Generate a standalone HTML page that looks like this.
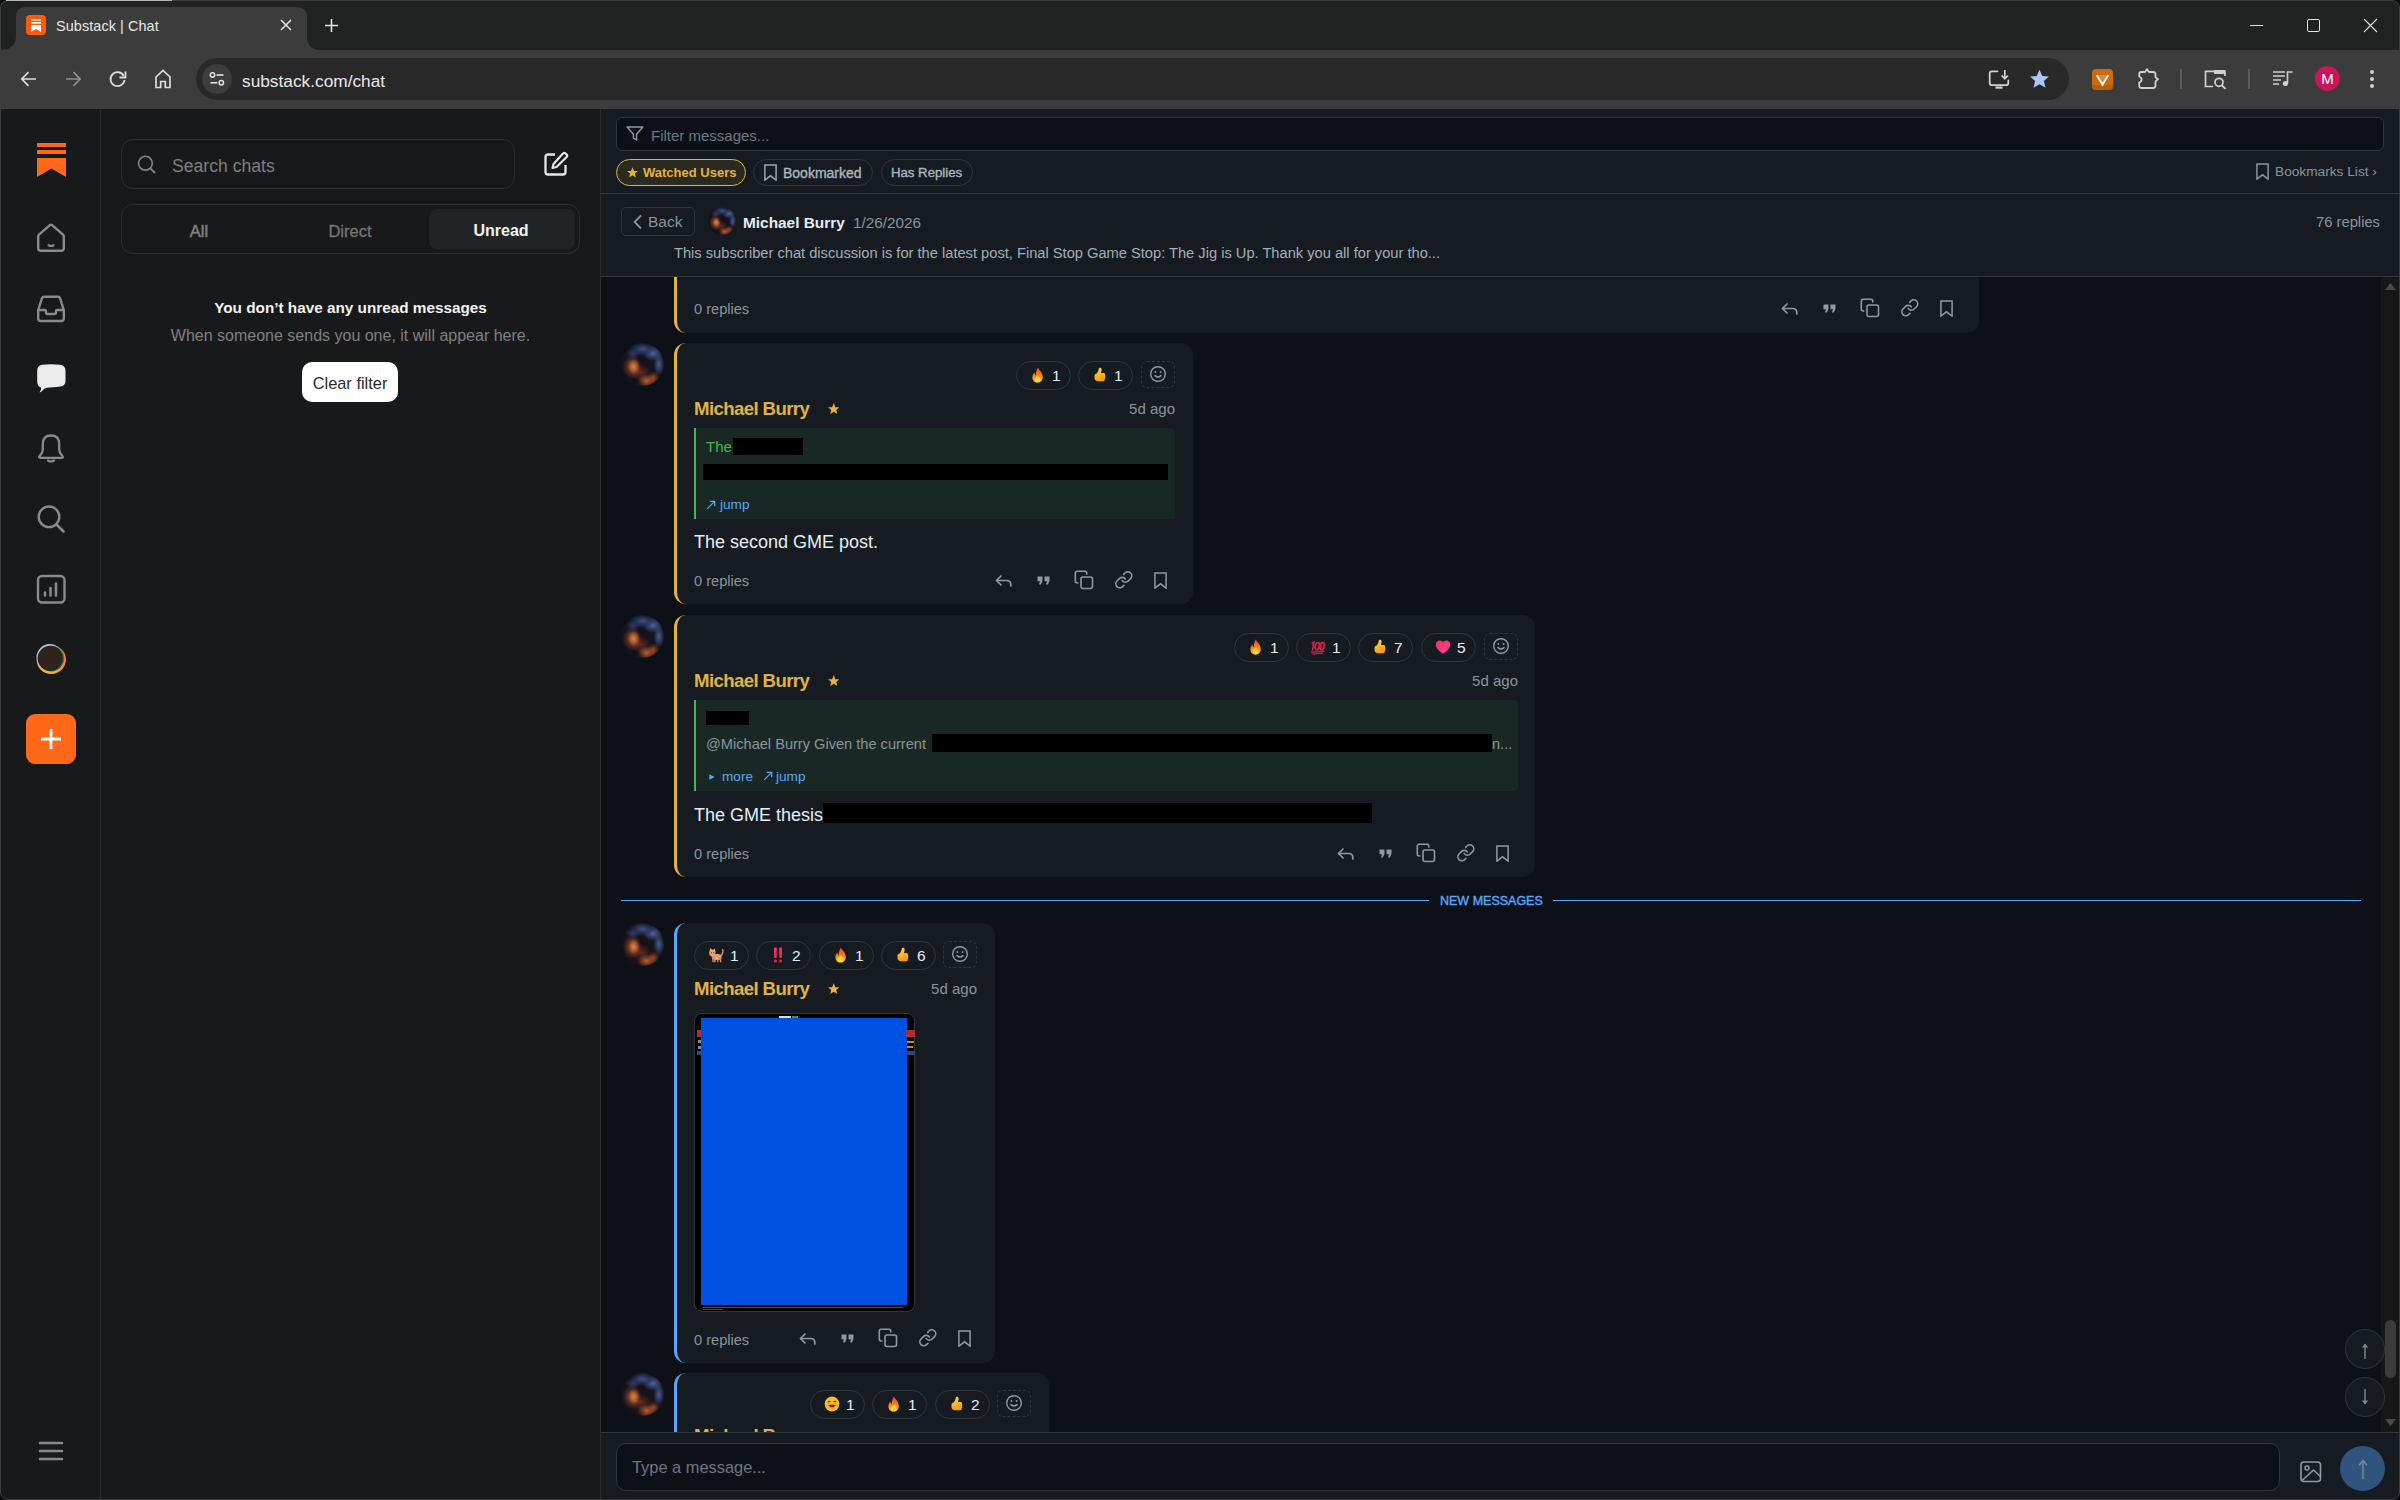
<!DOCTYPE html>
<html><head><meta charset="utf-8">
<style>
*{box-sizing:border-box;margin:0;padding:0}
html,body{width:2400px;height:1500px;overflow:hidden;background:#202020;font-family:"Liberation Sans",sans-serif}
.abs{position:absolute}
#tabstrip{left:0;top:0;width:2400px;height:50px;background:#202121}
#toolbar{left:0;top:50px;width:2400px;height:59px;background:#3c3c3c}
#page{left:0;top:109px;width:2400px;height:1391px;background:#18191b}
#rail{left:0;top:0;width:101px;height:1391px;background:#18191b;border-right:1px solid #2c2d2f}
#list{left:101px;top:0;width:500px;height:1391px;background:#18191b;border-right:1px solid #2c2d2f}
#main{left:601px;top:0;width:1799px;height:1391px;background:#0d1117}
svg{display:block}
</style></head>
<body>

<div id="tabstrip" class="abs">
  <!-- window border hint -->
  
  <!-- active tab -->
  <svg class="abs" style="left:0;top:0" width="330" height="50">
    <path d="M0 50 Q16 50 16 36 L16 17 Q16 7 26 7 L297 7 Q307 7 307 17 L307 36 Q307 50 321 50 Z" fill="#3c3c3c"/>
  </svg>
  <!-- favicon -->
  <div class="abs" style="left:26px;top:15px;width:20px;height:20px;border-radius:4px;background:#ff5a0a"></div>
  <svg class="abs" style="left:26px;top:15px" width="20" height="20"><rect x="5" y="4" width="10" height="1.6" fill="#fff"/><rect x="5" y="7" width="10" height="1.6" fill="#fff"/><path d="M5 10 L15 10 L15 17 L10 14 L5 17 Z" fill="#fff"/></svg>
  <div class="abs" style="left:56px;top:18px;font-size:14.4px;color:#e8e8e8;letter-spacing:0.1px">Substack | Chat</div>
  <svg class="abs" style="left:279px;top:18px" width="14" height="14"><path d="M2 2 L12 12 M12 2 L2 12" stroke="#e3e3e3" stroke-width="1.6"/></svg>
  <svg class="abs" style="left:324px;top:18px" width="15" height="15"><path d="M7.5 1 V14 M1 7.5 H14" stroke="#e3e3e3" stroke-width="1.6"/></svg>
  <!-- window controls -->
  <div class="abs" style="left:2250px;top:25px;width:13px;height:1px;background:#e3e3e3"></div>
  <div class="abs" style="left:2307px;top:19px;width:13px;height:13px;border:1px solid #e3e3e3;border-radius:2px"></div>
  <svg class="abs" style="left:2363px;top:18px" width="15" height="15"><path d="M1 1 L14 14 M14 1 L1 14" stroke="#e3e3e3" stroke-width="1.1"/></svg>
</div>
<div id="toolbar" class="abs">
  <svg class="abs" style="left:19px;top:19px" width="20" height="20"><path d="M17 10 H3 M9.5 3.2 L2.8 10 L9.5 16.8" stroke="#dcdcdc" stroke-width="1.7" fill="none"/></svg>
  <svg class="abs" style="left:63px;top:19px" width="20" height="20"><path d="M3 10 H17 M10.5 3.2 L17.2 10 L10.5 16.8" stroke="#8f8f8f" stroke-width="1.7" fill="none"/></svg>
  <svg class="abs" style="left:108px;top:19px" width="20" height="20"><path d="M15.8 7 A7 7 0 1 0 16.5 11" stroke="#dcdcdc" stroke-width="1.8" fill="none"/><path d="M17.5 2.5 V8.5 H11.5" stroke="#dcdcdc" stroke-width="1.8" fill="none"/></svg>
  <svg class="abs" style="left:153px;top:18px" width="20" height="22"><path d="M3 19.5 V9 L10 2.5 L17 9 V19.5 H12.3 V13.5 H7.7 V19.5 Z" stroke="#dcdcdc" stroke-width="1.7" fill="none" stroke-linejoin="miter"/></svg>
  <!-- omnibox -->
  <div class="abs" style="left:196px;top:8px;width:1873px;height:42px;border-radius:21px;background:#282828"></div>
  <div class="abs" style="left:202px;top:14px;width:30px;height:30px;border-radius:15px;background:#3d3d3d"></div>
  <svg class="abs" style="left:207px;top:19px" width="20" height="20"><circle cx="5.5" cy="6" r="2.2" stroke="#e3e3e3" stroke-width="1.5" fill="none"/><path d="M9.5 6 H16.5" stroke="#e3e3e3" stroke-width="1.6"/><circle cx="14.3" cy="13.8" r="2.2" stroke="#e3e3e3" stroke-width="1.5" fill="none"/><path d="M3.5 13.8 H10.3" stroke="#e3e3e3" stroke-width="1.6"/></svg>
  <div class="abs" style="left:242px;top:21px;font-size:17.3px;color:#e8e8e8">substack.com/chat</div>
  <!-- install icon -->
  <svg class="abs" style="left:1988px;top:19px" width="24" height="22"><path d="M9.5 2.3 H4 Q1.7 2.3 1.7 4.6 V14 Q1.7 16.2 4 16.2 H18 Q20.3 16.2 20.3 14 V11.5" stroke="#d0d0d0" stroke-width="1.8" fill="none" stroke-linecap="round"/><rect x="7.5" y="17.5" width="7" height="2.2" fill="#d0d0d0"/><path d="M16.8 1 V9.5 M13.6 6.5 L16.8 9.7 L20 6.5" stroke="#d0d0d0" stroke-width="1.7" fill="none"/></svg>
  <!-- star -->
  <svg class="abs" style="left:2029px;top:19px" width="21" height="20"><path d="M10.5 0.8 L13.3 7.1 L20 7.6 L14.9 12 L16.5 18.8 L10.5 15.2 L4.5 18.8 L6.1 12 L1 7.6 L7.7 7.1 Z" fill="#a8c7fa"/></svg>
  <!-- orange ext -->
  <div class="abs" style="left:2092px;top:19px;width:21px;height:21px;border-radius:4px;background:#cc6a0e"></div>
  <div class="abs" style="left:2092px;top:35px;width:21px;height:5px;border-radius:0 0 4px 4px;background:#b85c0a"></div>
  <svg class="abs" style="left:2092px;top:19px" width="21" height="21"><path d="M6 6 H15 L10.5 14 Z" fill="#d88a4a"/><path d="M4.8 6.2 L10.5 15.5 L16.2 6.2" stroke="#fff" stroke-width="1.8" fill="none"/><circle cx="10.5" cy="16.3" r="0.9" fill="#fff"/></svg>
  <!-- puzzle -->
  <svg class="abs" style="left:2136px;top:17px" width="25" height="24"><path d="M5 5 H9 L11 2.2 L13 5 H17 Q19.5 5 19.5 7.5 V10.2 L22 12.3 L19.5 14.4 V18.5 Q19.5 21 17 21 H5.5 Q3.2 21 3.2 18.5 V15.5 Q5.6 14.6 5.6 12.5 Q5.6 10.4 3.2 9.5 V7.5 Q3.2 5 5 5 Z" stroke="#d0d0d0" stroke-width="1.8" fill="none" stroke-linejoin="round"/></svg>
  <div class="abs" style="left:2180px;top:19px;width:2px;height:20px;background:#5c5c5c"></div>
  <!-- tab search -->
  <svg class="abs" style="left:2204px;top:19px" width="26" height="23"><path d="M9 17.5 H1.5 V2.3 H21 V7" stroke="#d0d0d0" stroke-width="1.7" fill="none"/><rect x="10" y="1" width="11" height="4" fill="#d0d0d0"/><circle cx="15" cy="13.3" r="4" stroke="#d0d0d0" stroke-width="1.7" fill="none"/><path d="M18 16.3 L21.5 19.8" stroke="#d0d0d0" stroke-width="1.9"/></svg>
  <div class="abs" style="left:2248px;top:19px;width:2px;height:20px;background:#5c5c5c"></div>
  <!-- media -->
  <svg class="abs" style="left:2272px;top:19px" width="22" height="20"><path d="M1 3 H13 M1 7 H13 M1 11 H9 M1 15 H7" stroke="#d0d0d0" stroke-width="1.6"/><path d="M15.5 14 V3 H20.5" stroke="#d0d0d0" stroke-width="1.6" fill="none"/><circle cx="13.5" cy="14.5" r="2.6" fill="#d0d0d0"/></svg>
  <!-- avatar -->
  <div class="abs" style="left:2315px;top:16px;width:25px;height:25px;border-radius:50%;background:#c5175a;color:#fff;font-size:15px;text-align:center;line-height:25px">M</div>
  <!-- menu -->
  <svg class="abs" style="left:2368px;top:19px" width="8" height="20"><circle cx="4" cy="3" r="2" fill="#d0d0d0"/><circle cx="4" cy="10" r="2" fill="#d0d0d0"/><circle cx="4" cy="17" r="2" fill="#d0d0d0"/></svg>
</div>

<div id="page" class="abs">
  <div id="rail" class="abs">
    <svg class="abs" style="left:37px;top:33px" width="30" height="36"><rect x="0" y="1" width="29" height="4" fill="#ff6719"/><rect x="0" y="8" width="29" height="4" fill="#ff6719"/><path d="M0 16 H29 V35 L14.5 26.5 L0 35 Z" fill="#ff6719"/></svg>
    <svg class="abs" style="left:35px;top:113px" width="32" height="32"><path d="M3.2 14.5 Q3.2 13.5 4 12.7 L14.6 3.3 Q16 2.2 17.4 3.3 L28 12.7 Q28.8 13.5 28.8 14.5 V26 Q28.8 28.8 26 28.8 H6 Q3.2 28.8 3.2 26 Z" stroke="#8a8a8a" stroke-width="2.4" fill="none" stroke-linejoin="round"/><path d="M13.5 23.2 Q16 24.6 18.5 23.2" stroke="#8a8a8a" stroke-width="2.2" fill="none" stroke-linecap="round"/></svg>
    <svg class="abs" style="left:35px;top:185px" width="32" height="32"><path d="M3.2 16 L7 4.2 Q7.5 2.8 9 2.8 H23 Q24.5 2.8 25 4.2 L28.8 16 V24.5 Q28.8 27 26.3 27 H5.7 Q3.2 27 3.2 24.5 Z" stroke="#8a8a8a" stroke-width="2.4" fill="none" stroke-linejoin="round"/><path d="M3.2 16 H10 Q11 16 11 17 V18.5 Q11 20 12.5 20 H19.5 Q21 20 21 18.5 V17 Q21 16 22 16 H28.8" stroke="#8a8a8a" stroke-width="2.4" fill="none" stroke-linejoin="round"/></svg>
    <svg class="abs" style="left:35px;top:254px" width="32" height="32"><path d="M7 1.8 Q16 0.6 25.5 1.8 Q30.5 2.5 30.5 8 V17.5 Q30.5 23 25.5 23.5 Q17 24.5 12 24.8 Q9.5 25 8 27 Q6.5 29 4.5 29.5 Q6.5 27 6 24.5 Q2.2 23.5 2.2 18 V8 Q2.2 2.5 7 1.8 Z" fill="#ececec"/></svg>
    <svg class="abs" style="left:35px;top:324px" width="32" height="32"><path d="M16 2.5 Q7.8 2.5 7.8 11 V16.5 Q7.8 19.5 5 22.5 Q3 24.8 5.5 24.8 H26.5 Q29 24.8 27 22.5 Q24.2 19.5 24.2 16.5 V11 Q24.2 2.5 16 2.5 Z" stroke="#8a8a8a" stroke-width="2.3" fill="none" stroke-linejoin="round"/><path d="M13 27.5 Q16 29.5 19 27.5" stroke="#8a8a8a" stroke-width="2.2" fill="none" stroke-linecap="round"/></svg>
    <svg class="abs" style="left:35px;top:394px" width="32" height="32"><circle cx="14" cy="13.8" r="10.3" stroke="#8a8a8a" stroke-width="2.4" fill="none"/><path d="M21.5 21.5 L28.5 28.5" stroke="#8a8a8a" stroke-width="2.6" stroke-linecap="round"/></svg>
    <svg class="abs" style="left:35px;top:464px" width="32" height="32"><rect x="3" y="3" width="26.5" height="26.5" rx="4" stroke="#8a8a8a" stroke-width="2.4" fill="none"/><path d="M10 22.5 V19.5 M15.5 22.5 V15 M21 22.5 V10.5" stroke="#8a8a8a" stroke-width="2.6" stroke-linecap="round"/></svg>
    <svg class="abs" style="left:35px;top:534px" width="32" height="32"><circle cx="16.8" cy="16.6" r="14.2" fill="#ff7548"/><circle cx="15.4" cy="17.2" r="13.6" fill="#fcb12c"/><circle cx="14.8" cy="14.4" r="13.3" fill="#b9bdf0"/><circle cx="16.4" cy="15.6" r="12.8" fill="#137a62"/><circle cx="15.2" cy="15.3" r="12.6" fill="#2e241c"/></svg>
    <div class="abs" style="left:26px;top:605px;width:50px;height:50px;border-radius:9px;background:#ff6719"></div>
    <svg class="abs" style="left:26px;top:605px" width="50" height="50"><path d="M25 15 V35 M15 25 H35" stroke="#fff" stroke-width="2.8"/></svg>
    <svg class="abs" style="left:38px;top:1331px" width="26" height="22"><path d="M2 3 H24 M2 11 H24 M2 19 H24" stroke="#8a8a8a" stroke-width="2.6" stroke-linecap="round"/></svg>
  </div>
  <div id="list" class="abs">
    <div class="abs" style="left:20px;top:30px;width:394px;height:50px;border:1px solid #2e2f32;border-radius:12px"></div>
    <svg class="abs" style="left:36px;top:46px" width="20" height="20"><circle cx="8.4" cy="8.2" r="6.9" stroke="#858585" stroke-width="1.6" fill="none"/><path d="M13.4 13.3 L17.6 17.5" stroke="#858585" stroke-width="1.8" stroke-linecap="round"/></svg>
    <div class="abs" style="left:71px;top:47px;font-size:17.6px;color:#7f7f7f">Search chats</div>
    <svg class="abs" style="left:442px;top:42px" width="26" height="26"><path d="M12 3.5 H5 Q2.5 3.5 2.5 6 V21 Q2.5 23.5 5 23.5 H20 Q22.5 23.5 22.5 21 V14" stroke="#e6e6e6" stroke-width="2.3" fill="none" stroke-linejoin="round"/><path d="M20 2.5 Q21.3 1.3 22.6 2.5 L23.6 3.5 Q24.8 4.8 23.6 6 L13.5 16 L9.5 17 L10.5 13 Z" stroke="#e6e6e6" stroke-width="2.2" fill="none" stroke-linejoin="round"/></svg>
    <div class="abs" style="left:20px;top:95px;width:459px;height:50px;border:1px solid #2e2f32;border-radius:12px"></div>
    <div class="abs" style="left:328px;top:100px;width:146px;height:40px;border-radius:8px;background:#232425"></div>
    <div class="abs tab" style="left:48px;top:113px;width:100px;text-align:center;font-size:16.5px;color:#7e7e7e;-webkit-text-stroke:0.55px #7e7e7e">All</div>
    <div class="abs tab" style="left:199px;top:113px;width:100px;text-align:center;font-size:16.5px;color:#747474;-webkit-text-stroke:0.3px #747474">Direct</div>
    <div class="abs tab" style="left:350px;top:113px;width:100px;text-align:center;font-size:16px;font-weight:bold;color:#f2f2f2">Unread</div>
    <div class="abs" style="left:0;top:190px;width:499px;text-align:center;font-size:15.3px;font-weight:bold;color:#f2f2f2">You don’t have any unread messages</div>
    <div class="abs" style="left:0;top:218px;width:499px;text-align:center;font-size:16px;color:#808080">When someone sends you one, it will appear here.</div>
    <div class="abs" style="left:201px;top:253px;width:96px;height:40px;border-radius:10px;background:#ffffff"></div>
    <div class="abs" style="left:201px;top:265px;width:96px;text-align:center;font-size:16.4px;color:#2a2a2a">Clear filter</div>
  </div>
  <div id="main" class="abs"></div>
</div>
<!--MAIN-->
<div class="abs" style="left:601px;top:277px;width:1799px;height:1155px;background:#0d1117"></div>
<div class="abs" style="left:674px;top:200px;width:1305px;height:133px;background:#161b22;border-radius:12px;border-left:3px solid #e3b341"></div>
<div class="abs" style="left:694px;top:302px;white-space:nowrap;line-height:1;font-size:14.6px;color:#8b949e">0 replies</div>
<svg class="abs" style="left:1781px;top:303px;" width="18" height="14" viewBox="0 0 18 14"><path d="M6 1 L1.5 5.5 L6 10" stroke="#9198a1" stroke-width="1.7" fill="none" stroke-linecap="round" stroke-linejoin="round"/><path d="M1.8 5.5 H11.5 Q15.8 5.5 15.8 9.5 V11" stroke="#9198a1" stroke-width="1.7" fill="none" stroke-linecap="round"/></svg>
<svg class="abs" style="left:1823px;top:304px;" width="14" height="10" viewBox="0 0 14 10"><path d="M0.5 0.5 H5.5 V5 L3.9 8.5 H2 L2.9 5.3 H0.5 Z M7.5 0.5 H12.5 V5 L10.9 8.5 H9 L9.9 5.3 H7.5 Z" fill="#9198a1"/></svg>
<svg class="abs" style="left:1860px;top:298px;" width="20" height="20" viewBox="0 0 20 20"><rect x="7" y="7" width="11.5" height="11.5" rx="2" stroke="#9198a1" stroke-width="1.6" fill="none"/><path d="M3.8 13 H3.3 Q1.3 13 1.3 11 V3.3 Q1.3 1.3 3.3 1.3 H10.8 Q12.8 1.3 12.8 3.3 V4" stroke="#9198a1" stroke-width="1.6" fill="none" stroke-linecap="round"/></svg>
<svg class="abs" style="left:1900px;top:298px;" width="20" height="20" viewBox="0 0 20 20"><g transform="translate(0.2 0.2) scale(0.8)"><path d="M10 13a5 5 0 0 0 7.54.54l3-3a5 5 0 0 0-7.07-7.07l-1.72 1.71" stroke="#9198a1" stroke-width="2" fill="none" stroke-linecap="round"/><path d="M14 11a5 5 0 0 0-7.54-.54l-3 3a5 5 0 0 0 7.07 7.07l1.71-1.71" stroke="#9198a1" stroke-width="2" fill="none" stroke-linecap="round"/></g></svg>
<svg class="abs" style="left:1940px;top:300px;" width="13" height="17" viewBox="0 0 13 17"><path d="M0.9 0.9 H12.1 V16.1 L6.5 11.8 L0.9 16.1 Z" stroke="#9198a1" stroke-width="1.5" fill="none"/></svg>
<div class="abs" style="left:621px;top:343px;width:43px;height:43px;border-radius:50%;background:radial-gradient(ellipse 14% 18% at 30% 55%, rgba(235,130,70,0.95) 0%, rgba(0,0,0,0) 100%),radial-gradient(ellipse 22% 28% at 26% 55%, rgba(190,90,45,0.8) 0%, rgba(0,0,0,0) 100%),radial-gradient(ellipse 22% 16% at 60% 88%, rgba(215,100,45,0.9) 0%, rgba(0,0,0,0) 100%),radial-gradient(ellipse 14% 14% at 76% 80%, rgba(200,90,40,0.7) 0%, rgba(0,0,0,0) 100%),radial-gradient(ellipse 26% 20% at 45% 68%, rgba(150,60,30,0.6) 0%, rgba(0,0,0,0) 100%),radial-gradient(ellipse 30% 16% at 50% 14%, rgba(62,84,145,0.95) 0%, rgba(40,55,100,0.6) 60%, rgba(0,0,0,0) 100%),radial-gradient(ellipse 24% 18% at 74% 24%, rgba(85,110,178,0.9) 0%, rgba(0,0,0,0) 100%),radial-gradient(ellipse 13% 26% at 88% 50%, rgba(80,105,170,0.85) 0%, rgba(0,0,0,0) 100%),radial-gradient(ellipse 18% 12% at 28% 24%, rgba(60,80,140,0.7) 0%, rgba(0,0,0,0) 100%),#15121a"></div>
<div class="abs" style="left:674px;top:343px;width:519px;height:261px;background:#161b22;border-radius:12px;border-left:3px solid #e3b341"></div>
<div class="abs" style="left:1016px;top:361px;width:55px;height:29px;border:1px solid #30363d;border-radius:15px"></div>
<svg class="abs" style="left:1030px;top:367px;" width="16" height="16" viewBox="0 0 16 16"><defs><linearGradient id="gf" x1="0" y1="0" x2="0" y2="1"><stop offset="0" stop-color="#f0412a"/><stop offset="0.6" stop-color="#f98a1c"/><stop offset="1" stop-color="#fcc21b"/></linearGradient></defs><path d="M7.8 0.5 C9 3 12.8 5.5 12.8 10 C12.8 13.4 10.6 15.6 7.6 15.6 C4.6 15.6 2.4 13.4 2.4 10.5 C2.4 8 3.6 6.5 4.6 5.6 C4.6 7.2 5.2 8.2 5.9 8.6 C5.6 5.5 6.5 2.5 7.8 0.5 Z" fill="url(#gf)"/><path d="M7.8 8 C9 9.5 10.5 10.8 10.5 12.6 C10.5 14.2 9.3 15.3 7.6 15.3 C5.9 15.3 4.8 14.2 4.8 12.7 C4.8 11.2 6 10.5 6.5 9.6 C7 10.4 7.4 10.6 7.8 8 Z" fill="#fdd835"/></svg>
<div class="abs" style="left:1052px;top:368px;white-space:nowrap;line-height:1;font-size:15.5px;color:#e6edf3">1</div>
<div class="abs" style="left:1078px;top:361px;width:55px;height:29px;border:1px solid #30363d;border-radius:15px"></div>
<svg class="abs" style="left:1092px;top:367px;" width="16" height="16" viewBox="0 0 16 16"><defs><linearGradient id="gt" x1="0" y1="0" x2="0" y2="1"><stop offset="0" stop-color="#fcd34d"/><stop offset="1" stop-color="#f59e0b"/></linearGradient></defs><path d="M2.5 8.5 C2.5 7.2 3.5 6.6 4.6 6.4 C5.8 5.4 6.6 3.6 6.8 1.8 C7 0.3 9.5 0.4 9.6 2.3 C9.7 3.6 9.3 4.9 8.9 5.9 H11.6 C12.9 5.9 13.4 7.1 12.9 7.9 C13.6 8.4 13.6 9.6 12.9 10.1 C13.5 10.7 13.4 11.8 12.6 12.2 C13 13.1 12.5 14.2 11.3 14.2 H6 C3.9 14.2 2.5 13 2.5 11 Z" fill="url(#gt)"/><path d="M8.6 8 H12.6 M8.6 10.1 H12.6 M8.8 12.2 H12.2" stroke="#e39a0b" stroke-width="0.7"/></svg>
<div class="abs" style="left:1114px;top:368px;white-space:nowrap;line-height:1;font-size:15.5px;color:#e6edf3">1</div>
<div class="abs" style="left:1141px;top:361px;width:34px;height:27px;border:1px dashed #30363d;border-radius:6px"></div>
<svg class="abs" style="left:1149px;top:365px;" width="18" height="18" viewBox="0 0 18 18"><circle cx="9" cy="9" r="7.3" stroke="#9198a1" stroke-width="1.4" fill="none"/><circle cx="6.4" cy="7" r="0.9" fill="#9198a1"/><circle cx="11.6" cy="7" r="0.9" fill="#9198a1"/><path d="M5.9 10.6 Q9 13.3 12.1 10.6" stroke="#9198a1" stroke-width="1.4" fill="none" stroke-linecap="round"/></svg>
<div class="abs" style="left:694px;top:400px;white-space:nowrap;line-height:1;font-size:18.6px;font-weight:bold;letter-spacing:-0.6px;color:#e3b341">Michael Burry</div>
<svg class="abs" style="left:827.5px;top:403px;" width="11.5" height="11.5" viewBox="0 0 11.5 11.5"><path d="M5.75 0.23 L7.36 4.14 L11.385 4.255 L8.28 6.8999999999999995 L9.315000000000001 11.04 L5.75 8.74 L2.185 11.04 L3.22 6.8999999999999995 L0.115 4.255 L4.14 4.14 Z" fill="#e3b341"/></svg>
<div class="abs" style="left:975px;top:401px;width:200px;text-align:right;white-space:nowrap;line-height:1;font-size:15px;color:#8b949e">5d ago</div>
<div class="abs" style="left:694px;top:428px;width:481px;height:91px;background:#1a2825;border-left:2px solid #3fb950;border-radius:0 4px 4px 0"></div>
<div class="abs" style="left:706px;top:439px;white-space:nowrap;line-height:1;font-size:15px;color:#3fb950">The</div>
<div class="abs" style="left:733px;top:438px;width:70px;height:17px;background:#000"></div>
<div class="abs" style="left:703px;top:464px;width:465px;height:16px;background:#000"></div>
<svg class="abs" style="left:706px;top:500px;" width="10" height="10" viewBox="0 0 10 10"><path d="M1.2 8.8 L8.3 1.7" stroke="#58a6ff" stroke-width="1.2"/><path d="M3.8 1.3 H8.7 V6.2" stroke="#58a6ff" stroke-width="1.2" fill="none"/></svg>
<div class="abs" style="left:720px;top:498px;white-space:nowrap;line-height:1;font-size:13.6px;color:#58a6ff">jump</div>
<div class="abs" style="left:694px;top:533px;white-space:nowrap;line-height:1;font-size:18px;color:#e6edf3">The second GME post.</div>
<div class="abs" style="left:694px;top:574px;white-space:nowrap;line-height:1;font-size:14.6px;color:#8b949e">0 replies</div>
<svg class="abs" style="left:995px;top:575px;" width="18" height="14" viewBox="0 0 18 14"><path d="M6 1 L1.5 5.5 L6 10" stroke="#9198a1" stroke-width="1.7" fill="none" stroke-linecap="round" stroke-linejoin="round"/><path d="M1.8 5.5 H11.5 Q15.8 5.5 15.8 9.5 V11" stroke="#9198a1" stroke-width="1.7" fill="none" stroke-linecap="round"/></svg>
<svg class="abs" style="left:1037px;top:576px;" width="14" height="10" viewBox="0 0 14 10"><path d="M0.5 0.5 H5.5 V5 L3.9 8.5 H2 L2.9 5.3 H0.5 Z M7.5 0.5 H12.5 V5 L10.9 8.5 H9 L9.9 5.3 H7.5 Z" fill="#9198a1"/></svg>
<svg class="abs" style="left:1074px;top:570px;" width="20" height="20" viewBox="0 0 20 20"><rect x="7" y="7" width="11.5" height="11.5" rx="2" stroke="#9198a1" stroke-width="1.6" fill="none"/><path d="M3.8 13 H3.3 Q1.3 13 1.3 11 V3.3 Q1.3 1.3 3.3 1.3 H10.8 Q12.8 1.3 12.8 3.3 V4" stroke="#9198a1" stroke-width="1.6" fill="none" stroke-linecap="round"/></svg>
<svg class="abs" style="left:1114px;top:570px;" width="20" height="20" viewBox="0 0 20 20"><g transform="translate(0.2 0.2) scale(0.8)"><path d="M10 13a5 5 0 0 0 7.54.54l3-3a5 5 0 0 0-7.07-7.07l-1.72 1.71" stroke="#9198a1" stroke-width="2" fill="none" stroke-linecap="round"/><path d="M14 11a5 5 0 0 0-7.54-.54l-3 3a5 5 0 0 0 7.07 7.07l1.71-1.71" stroke="#9198a1" stroke-width="2" fill="none" stroke-linecap="round"/></g></svg>
<svg class="abs" style="left:1154px;top:572px;" width="13" height="17" viewBox="0 0 13 17"><path d="M0.9 0.9 H12.1 V16.1 L6.5 11.8 L0.9 16.1 Z" stroke="#9198a1" stroke-width="1.5" fill="none"/></svg>
<div class="abs" style="left:621px;top:615px;width:43px;height:43px;border-radius:50%;background:radial-gradient(ellipse 14% 18% at 30% 55%, rgba(235,130,70,0.95) 0%, rgba(0,0,0,0) 100%),radial-gradient(ellipse 22% 28% at 26% 55%, rgba(190,90,45,0.8) 0%, rgba(0,0,0,0) 100%),radial-gradient(ellipse 22% 16% at 60% 88%, rgba(215,100,45,0.9) 0%, rgba(0,0,0,0) 100%),radial-gradient(ellipse 14% 14% at 76% 80%, rgba(200,90,40,0.7) 0%, rgba(0,0,0,0) 100%),radial-gradient(ellipse 26% 20% at 45% 68%, rgba(150,60,30,0.6) 0%, rgba(0,0,0,0) 100%),radial-gradient(ellipse 30% 16% at 50% 14%, rgba(62,84,145,0.95) 0%, rgba(40,55,100,0.6) 60%, rgba(0,0,0,0) 100%),radial-gradient(ellipse 24% 18% at 74% 24%, rgba(85,110,178,0.9) 0%, rgba(0,0,0,0) 100%),radial-gradient(ellipse 13% 26% at 88% 50%, rgba(80,105,170,0.85) 0%, rgba(0,0,0,0) 100%),radial-gradient(ellipse 18% 12% at 28% 24%, rgba(60,80,140,0.7) 0%, rgba(0,0,0,0) 100%),#15121a"></div>
<div class="abs" style="left:674px;top:615px;width:861px;height:262px;background:#161b22;border-radius:12px;border-left:3px solid #e3b341"></div>
<div class="abs" style="left:1234px;top:633px;width:55px;height:29px;border:1px solid #30363d;border-radius:15px"></div>
<svg class="abs" style="left:1248px;top:639px;" width="16" height="16" viewBox="0 0 16 16"><defs><linearGradient id="gf" x1="0" y1="0" x2="0" y2="1"><stop offset="0" stop-color="#f0412a"/><stop offset="0.6" stop-color="#f98a1c"/><stop offset="1" stop-color="#fcc21b"/></linearGradient></defs><path d="M7.8 0.5 C9 3 12.8 5.5 12.8 10 C12.8 13.4 10.6 15.6 7.6 15.6 C4.6 15.6 2.4 13.4 2.4 10.5 C2.4 8 3.6 6.5 4.6 5.6 C4.6 7.2 5.2 8.2 5.9 8.6 C5.6 5.5 6.5 2.5 7.8 0.5 Z" fill="url(#gf)"/><path d="M7.8 8 C9 9.5 10.5 10.8 10.5 12.6 C10.5 14.2 9.3 15.3 7.6 15.3 C5.9 15.3 4.8 14.2 4.8 12.7 C4.8 11.2 6 10.5 6.5 9.6 C7 10.4 7.4 10.6 7.8 8 Z" fill="#fdd835"/></svg>
<div class="abs" style="left:1270px;top:640px;white-space:nowrap;line-height:1;font-size:15.5px;color:#e6edf3">1</div>
<div class="abs" style="left:1296px;top:633px;width:55px;height:29px;border:1px solid #30363d;border-radius:15px"></div>
<svg class="abs" style="left:1310px;top:639px;" width="16" height="16" viewBox="0 0 16 16"><g fill="none" stroke="#e11d48" stroke-width="1.7"><path d="M1.8 4.5 L3.8 3.2 L2.6 11.5"/><ellipse cx="7.3" cy="7.2" rx="2" ry="3.6" transform="rotate(12 7.3 7.2)"/><ellipse cx="12.2" cy="7.2" rx="2" ry="3.6" transform="rotate(12 12.2 7.2)"/></g><path d="M1 13.2 L14.5 12.2 M1.6 15 L13 14.2" stroke="#e11d48" stroke-width="1.2"/></svg>
<div class="abs" style="left:1332px;top:640px;white-space:nowrap;line-height:1;font-size:15.5px;color:#e6edf3">1</div>
<div class="abs" style="left:1358px;top:633px;width:55px;height:29px;border:1px solid #30363d;border-radius:15px"></div>
<svg class="abs" style="left:1372px;top:639px;" width="16" height="16" viewBox="0 0 16 16"><defs><linearGradient id="gt" x1="0" y1="0" x2="0" y2="1"><stop offset="0" stop-color="#fcd34d"/><stop offset="1" stop-color="#f59e0b"/></linearGradient></defs><path d="M2.5 8.5 C2.5 7.2 3.5 6.6 4.6 6.4 C5.8 5.4 6.6 3.6 6.8 1.8 C7 0.3 9.5 0.4 9.6 2.3 C9.7 3.6 9.3 4.9 8.9 5.9 H11.6 C12.9 5.9 13.4 7.1 12.9 7.9 C13.6 8.4 13.6 9.6 12.9 10.1 C13.5 10.7 13.4 11.8 12.6 12.2 C13 13.1 12.5 14.2 11.3 14.2 H6 C3.9 14.2 2.5 13 2.5 11 Z" fill="url(#gt)"/><path d="M8.6 8 H12.6 M8.6 10.1 H12.6 M8.8 12.2 H12.2" stroke="#e39a0b" stroke-width="0.7"/></svg>
<div class="abs" style="left:1394px;top:640px;white-space:nowrap;line-height:1;font-size:15.5px;color:#e6edf3">7</div>
<div class="abs" style="left:1421px;top:633px;width:55px;height:29px;border:1px solid #30363d;border-radius:15px"></div>
<svg class="abs" style="left:1435px;top:639px;" width="16" height="16" viewBox="0 0 16 16"><defs><linearGradient id="gh" x1="0" y1="0" x2="1" y2="1"><stop offset="0" stop-color="#f0365a"/><stop offset="1" stop-color="#ff3fa4"/></linearGradient></defs><path d="M8 14.8 C3 11.2 0.8 8.8 0.8 5.6 C0.8 3.2 2.6 1.4 4.8 1.4 C6.2 1.4 7.3 2.1 8 3.2 C8.7 2.1 9.8 1.4 11.2 1.4 C13.4 1.4 15.2 3.2 15.2 5.6 C15.2 8.8 13 11.2 8 14.8 Z" fill="url(#gh)"/></svg>
<div class="abs" style="left:1457px;top:640px;white-space:nowrap;line-height:1;font-size:15.5px;color:#e6edf3">5</div>
<div class="abs" style="left:1484px;top:633px;width:34px;height:27px;border:1px dashed #30363d;border-radius:6px"></div>
<svg class="abs" style="left:1492px;top:637px;" width="18" height="18" viewBox="0 0 18 18"><circle cx="9" cy="9" r="7.3" stroke="#9198a1" stroke-width="1.4" fill="none"/><circle cx="6.4" cy="7" r="0.9" fill="#9198a1"/><circle cx="11.6" cy="7" r="0.9" fill="#9198a1"/><path d="M5.9 10.6 Q9 13.3 12.1 10.6" stroke="#9198a1" stroke-width="1.4" fill="none" stroke-linecap="round"/></svg>
<div class="abs" style="left:694px;top:672px;white-space:nowrap;line-height:1;font-size:18.6px;font-weight:bold;letter-spacing:-0.6px;color:#e3b341">Michael Burry</div>
<svg class="abs" style="left:827.5px;top:675px;" width="11.5" height="11.5" viewBox="0 0 11.5 11.5"><path d="M5.75 0.23 L7.36 4.14 L11.385 4.255 L8.28 6.8999999999999995 L9.315000000000001 11.04 L5.75 8.74 L2.185 11.04 L3.22 6.8999999999999995 L0.115 4.255 L4.14 4.14 Z" fill="#e3b341"/></svg>
<div class="abs" style="left:1318px;top:673px;width:200px;text-align:right;white-space:nowrap;line-height:1;font-size:15px;color:#8b949e">5d ago</div>
<div class="abs" style="left:694px;top:700px;width:824px;height:91px;background:#1a2825;border-left:2px solid #3fb950;border-radius:0 4px 4px 0"></div>
<div class="abs" style="left:706px;top:711px;width:43px;height:14px;background:#000"></div>
<div class="abs" style="left:706px;top:737px;white-space:nowrap;line-height:1;font-size:14.6px;color:#8b949e">@Michael Burry Given the current</div>
<div class="abs" style="left:932px;top:734px;width:560px;height:18px;background:#000"></div>
<div class="abs" style="left:1492px;top:737px;white-space:nowrap;line-height:1;font-size:14.6px;color:#8b949e">n...</div>
<svg class="abs" style="left:709px;top:774px;" width="6" height="6" viewBox="0 0 6 6"><path d="M0.3 0.3 L5.6 3 L0.3 5.7 Z" fill="#58a6ff"/></svg>
<div class="abs" style="left:722px;top:770px;white-space:nowrap;line-height:1;font-size:13.6px;color:#58a6ff">more</div>
<svg class="abs" style="left:763px;top:771px;" width="10" height="10" viewBox="0 0 10 10"><path d="M1.2 8.8 L8.3 1.7" stroke="#58a6ff" stroke-width="1.2"/><path d="M3.8 1.3 H8.7 V6.2" stroke="#58a6ff" stroke-width="1.2" fill="none"/></svg>
<div class="abs" style="left:776px;top:770px;white-space:nowrap;line-height:1;font-size:13.6px;color:#58a6ff">jump</div>
<div class="abs" style="left:694px;top:806px;white-space:nowrap;line-height:1;font-size:18px;color:#e6edf3">The GME thesis</div>
<div class="abs" style="left:823px;top:803px;width:549px;height:20px;background:#000"></div>
<div class="abs" style="left:694px;top:847px;white-space:nowrap;line-height:1;font-size:14.6px;color:#8b949e">0 replies</div>
<svg class="abs" style="left:1337px;top:848px;" width="18" height="14" viewBox="0 0 18 14"><path d="M6 1 L1.5 5.5 L6 10" stroke="#9198a1" stroke-width="1.7" fill="none" stroke-linecap="round" stroke-linejoin="round"/><path d="M1.8 5.5 H11.5 Q15.8 5.5 15.8 9.5 V11" stroke="#9198a1" stroke-width="1.7" fill="none" stroke-linecap="round"/></svg>
<svg class="abs" style="left:1379px;top:849px;" width="14" height="10" viewBox="0 0 14 10"><path d="M0.5 0.5 H5.5 V5 L3.9 8.5 H2 L2.9 5.3 H0.5 Z M7.5 0.5 H12.5 V5 L10.9 8.5 H9 L9.9 5.3 H7.5 Z" fill="#9198a1"/></svg>
<svg class="abs" style="left:1416px;top:843px;" width="20" height="20" viewBox="0 0 20 20"><rect x="7" y="7" width="11.5" height="11.5" rx="2" stroke="#9198a1" stroke-width="1.6" fill="none"/><path d="M3.8 13 H3.3 Q1.3 13 1.3 11 V3.3 Q1.3 1.3 3.3 1.3 H10.8 Q12.8 1.3 12.8 3.3 V4" stroke="#9198a1" stroke-width="1.6" fill="none" stroke-linecap="round"/></svg>
<svg class="abs" style="left:1456px;top:843px;" width="20" height="20" viewBox="0 0 20 20"><g transform="translate(0.2 0.2) scale(0.8)"><path d="M10 13a5 5 0 0 0 7.54.54l3-3a5 5 0 0 0-7.07-7.07l-1.72 1.71" stroke="#9198a1" stroke-width="2" fill="none" stroke-linecap="round"/><path d="M14 11a5 5 0 0 0-7.54-.54l-3 3a5 5 0 0 0 7.07 7.07l1.71-1.71" stroke="#9198a1" stroke-width="2" fill="none" stroke-linecap="round"/></g></svg>
<svg class="abs" style="left:1496px;top:845px;" width="13" height="17" viewBox="0 0 13 17"><path d="M0.9 0.9 H12.1 V16.1 L6.5 11.8 L0.9 16.1 Z" stroke="#9198a1" stroke-width="1.5" fill="none"/></svg>
<div class="abs" style="left:621px;top:900px;width:808px;height:1px;background:#58a6ff"></div>
<div class="abs" style="left:1553px;top:900px;width:808px;height:1px;background:#58a6ff"></div>
<div class="abs" style="left:1440px;top:895px;white-space:nowrap;line-height:1;font-size:12.5px;color:#58a6ff;-webkit-text-stroke:0.4px #58a6ff">NEW MESSAGES</div>
<div class="abs" style="left:621px;top:923px;width:43px;height:43px;border-radius:50%;background:radial-gradient(ellipse 14% 18% at 30% 55%, rgba(235,130,70,0.95) 0%, rgba(0,0,0,0) 100%),radial-gradient(ellipse 22% 28% at 26% 55%, rgba(190,90,45,0.8) 0%, rgba(0,0,0,0) 100%),radial-gradient(ellipse 22% 16% at 60% 88%, rgba(215,100,45,0.9) 0%, rgba(0,0,0,0) 100%),radial-gradient(ellipse 14% 14% at 76% 80%, rgba(200,90,40,0.7) 0%, rgba(0,0,0,0) 100%),radial-gradient(ellipse 26% 20% at 45% 68%, rgba(150,60,30,0.6) 0%, rgba(0,0,0,0) 100%),radial-gradient(ellipse 30% 16% at 50% 14%, rgba(62,84,145,0.95) 0%, rgba(40,55,100,0.6) 60%, rgba(0,0,0,0) 100%),radial-gradient(ellipse 24% 18% at 74% 24%, rgba(85,110,178,0.9) 0%, rgba(0,0,0,0) 100%),radial-gradient(ellipse 13% 26% at 88% 50%, rgba(80,105,170,0.85) 0%, rgba(0,0,0,0) 100%),radial-gradient(ellipse 18% 12% at 28% 24%, rgba(60,80,140,0.7) 0%, rgba(0,0,0,0) 100%),#15121a"></div>
<div class="abs" style="left:674px;top:923px;width:321px;height:440px;background:#161b22;border-radius:12px;border-left:3px solid #58a6ff"></div>
<div class="abs" style="left:694px;top:941px;width:55px;height:29px;border:1px solid #30363d;border-radius:15px"></div>
<svg class="abs" style="left:708px;top:947px;" width="16" height="16" viewBox="0 0 16 16"><defs><linearGradient id="gc" x1="0" y1="0" x2="0" y2="1"><stop offset="0" stop-color="#f2b27a"/><stop offset="1" stop-color="#d98a55"/></linearGradient></defs><path d="M12.5 8.5 C13.5 7 14.8 5 14 3 C13.6 2 14.8 1.6 15.3 2.6 C16.2 4.8 15 7.6 13.5 9.2 Z" fill="#e09a62"/><path d="M1.8 3.2 L2.6 1 L4 2.8 L5.6 2.8 L6.6 1.2 L7.2 3.6 C7.8 5 7.6 6.4 7 7.2 C9 6.8 12 7 13 8 C14 9 13.8 11 13.2 12 L13.4 15.2 H12 L11.6 12.8 C10.4 13.2 8.8 13.2 7.6 13 L7.4 15.2 H6 L5.6 12.4 C4.6 11.8 4 10.6 3.8 9.4 C2.2 9.2 1.2 8 1.2 6.2 C1.2 5 1.4 4 1.8 3.2 Z" fill="url(#gc)"/><path d="M5.2 10 L5.6 15.2 H4.4 L4 11 Z M10.4 12.9 L10.2 15.2 H9 L9.2 12.9 Z" fill="#d98a55"/><ellipse cx="8.8" cy="11.2" rx="1.4" ry="1" fill="#f3c4d8"/><circle cx="3.4" cy="5.6" r="0.55" fill="#5b3a29"/><circle cx="5.8" cy="5.6" r="0.55" fill="#5b3a29"/></svg>
<div class="abs" style="left:730px;top:948px;white-space:nowrap;line-height:1;font-size:15.5px;color:#e6edf3">1</div>
<div class="abs" style="left:756px;top:941px;width:55px;height:29px;border:1px solid #30363d;border-radius:15px"></div>
<svg class="abs" style="left:770px;top:947px;" width="16" height="16" viewBox="0 0 16 16"><defs><linearGradient id="gb" x1="0" y1="0" x2="0" y2="1"><stop offset="0" stop-color="#f7357a"/><stop offset="1" stop-color="#e8243c"/></linearGradient></defs><rect x="4" y="0.5" width="2.8" height="10.5" rx="0.8" fill="url(#gb)"/><rect x="9.2" y="0.5" width="2.8" height="10.5" rx="0.8" fill="url(#gb)"/><rect x="4" y="12.6" width="2.8" height="2.8" rx="0.9" fill="#e8243c"/><rect x="9.2" y="12.6" width="2.8" height="2.8" rx="0.9" fill="#e8243c"/></svg>
<div class="abs" style="left:792px;top:948px;white-space:nowrap;line-height:1;font-size:15.5px;color:#e6edf3">2</div>
<div class="abs" style="left:819px;top:941px;width:55px;height:29px;border:1px solid #30363d;border-radius:15px"></div>
<svg class="abs" style="left:833px;top:947px;" width="16" height="16" viewBox="0 0 16 16"><defs><linearGradient id="gf" x1="0" y1="0" x2="0" y2="1"><stop offset="0" stop-color="#f0412a"/><stop offset="0.6" stop-color="#f98a1c"/><stop offset="1" stop-color="#fcc21b"/></linearGradient></defs><path d="M7.8 0.5 C9 3 12.8 5.5 12.8 10 C12.8 13.4 10.6 15.6 7.6 15.6 C4.6 15.6 2.4 13.4 2.4 10.5 C2.4 8 3.6 6.5 4.6 5.6 C4.6 7.2 5.2 8.2 5.9 8.6 C5.6 5.5 6.5 2.5 7.8 0.5 Z" fill="url(#gf)"/><path d="M7.8 8 C9 9.5 10.5 10.8 10.5 12.6 C10.5 14.2 9.3 15.3 7.6 15.3 C5.9 15.3 4.8 14.2 4.8 12.7 C4.8 11.2 6 10.5 6.5 9.6 C7 10.4 7.4 10.6 7.8 8 Z" fill="#fdd835"/></svg>
<div class="abs" style="left:855px;top:948px;white-space:nowrap;line-height:1;font-size:15.5px;color:#e6edf3">1</div>
<div class="abs" style="left:881px;top:941px;width:55px;height:29px;border:1px solid #30363d;border-radius:15px"></div>
<svg class="abs" style="left:895px;top:947px;" width="16" height="16" viewBox="0 0 16 16"><defs><linearGradient id="gt" x1="0" y1="0" x2="0" y2="1"><stop offset="0" stop-color="#fcd34d"/><stop offset="1" stop-color="#f59e0b"/></linearGradient></defs><path d="M2.5 8.5 C2.5 7.2 3.5 6.6 4.6 6.4 C5.8 5.4 6.6 3.6 6.8 1.8 C7 0.3 9.5 0.4 9.6 2.3 C9.7 3.6 9.3 4.9 8.9 5.9 H11.6 C12.9 5.9 13.4 7.1 12.9 7.9 C13.6 8.4 13.6 9.6 12.9 10.1 C13.5 10.7 13.4 11.8 12.6 12.2 C13 13.1 12.5 14.2 11.3 14.2 H6 C3.9 14.2 2.5 13 2.5 11 Z" fill="url(#gt)"/><path d="M8.6 8 H12.6 M8.6 10.1 H12.6 M8.8 12.2 H12.2" stroke="#e39a0b" stroke-width="0.7"/></svg>
<div class="abs" style="left:917px;top:948px;white-space:nowrap;line-height:1;font-size:15.5px;color:#e6edf3">6</div>
<div class="abs" style="left:943px;top:941px;width:34px;height:27px;border:1px dashed #30363d;border-radius:6px"></div>
<svg class="abs" style="left:951px;top:945px;" width="18" height="18" viewBox="0 0 18 18"><circle cx="9" cy="9" r="7.3" stroke="#9198a1" stroke-width="1.4" fill="none"/><circle cx="6.4" cy="7" r="0.9" fill="#9198a1"/><circle cx="11.6" cy="7" r="0.9" fill="#9198a1"/><path d="M5.9 10.6 Q9 13.3 12.1 10.6" stroke="#9198a1" stroke-width="1.4" fill="none" stroke-linecap="round"/></svg>
<div class="abs" style="left:694px;top:980px;white-space:nowrap;line-height:1;font-size:18.6px;font-weight:bold;letter-spacing:-0.6px;color:#e3b341">Michael Burry</div>
<svg class="abs" style="left:827.5px;top:983px;" width="11.5" height="11.5" viewBox="0 0 11.5 11.5"><path d="M5.75 0.23 L7.36 4.14 L11.385 4.255 L8.28 6.8999999999999995 L9.315000000000001 11.04 L5.75 8.74 L2.185 11.04 L3.22 6.8999999999999995 L0.115 4.255 L4.14 4.14 Z" fill="#e3b341"/></svg>
<div class="abs" style="left:777px;top:981px;width:200px;text-align:right;white-space:nowrap;line-height:1;font-size:15px;color:#8b949e">5d ago</div>
<div class="abs" style="left:694px;top:1013px;width:221px;height:299px;background:#000;border:1px solid #30363d;border-radius:8px"></div>
<div class="abs" style="left:701px;top:1018px;width:206px;height:287px;background:#0050e4"></div>
<div class="abs" style="left:697px;top:1030px;width:4px;height:7px;background:#a83232"></div>
<div class="abs" style="left:906px;top:1030px;width:9px;height:7px;background:#a83232"></div>
<div class="abs" style="left:698px;top:1040px;width:3px;height:3px;background:#8a8a8a"></div>
<div class="abs" style="left:698px;top:1046px;width:3px;height:3px;background:#8a8a8a"></div>
<div class="abs" style="left:697px;top:1051px;width:4px;height:4px;background:#2b4a7e"></div>
<div class="abs" style="left:907px;top:1041px;width:7px;height:2px;background:#c88a20"></div>
<div class="abs" style="left:907px;top:1046px;width:6px;height:2px;background:#c88a20"></div>
<div class="abs" style="left:906px;top:1051px;width:9px;height:4px;background:#2b4a7e"></div>
<div class="abs" style="left:779px;top:1016px;width:12px;height:2px;background:#e0e0e0"></div>
<div class="abs" style="left:792px;top:1016px;width:6px;height:2px;background:#3a9a40"></div>
<div class="abs" style="left:703px;top:1307px;width:200px;height:1px;background:#5a4c20"></div>
<div class="abs" style="left:703px;top:1309px;width:20px;height:1px;background:#5a4c20"></div>
<div class="abs" style="left:694px;top:1333px;white-space:nowrap;line-height:1;font-size:14.6px;color:#8b949e">0 replies</div>
<svg class="abs" style="left:799px;top:1333px;" width="18" height="14" viewBox="0 0 18 14"><path d="M6 1 L1.5 5.5 L6 10" stroke="#9198a1" stroke-width="1.7" fill="none" stroke-linecap="round" stroke-linejoin="round"/><path d="M1.8 5.5 H11.5 Q15.8 5.5 15.8 9.5 V11" stroke="#9198a1" stroke-width="1.7" fill="none" stroke-linecap="round"/></svg>
<svg class="abs" style="left:841px;top:1334px;" width="14" height="10" viewBox="0 0 14 10"><path d="M0.5 0.5 H5.5 V5 L3.9 8.5 H2 L2.9 5.3 H0.5 Z M7.5 0.5 H12.5 V5 L10.9 8.5 H9 L9.9 5.3 H7.5 Z" fill="#9198a1"/></svg>
<svg class="abs" style="left:878px;top:1328px;" width="20" height="20" viewBox="0 0 20 20"><rect x="7" y="7" width="11.5" height="11.5" rx="2" stroke="#9198a1" stroke-width="1.6" fill="none"/><path d="M3.8 13 H3.3 Q1.3 13 1.3 11 V3.3 Q1.3 1.3 3.3 1.3 H10.8 Q12.8 1.3 12.8 3.3 V4" stroke="#9198a1" stroke-width="1.6" fill="none" stroke-linecap="round"/></svg>
<svg class="abs" style="left:918px;top:1328px;" width="20" height="20" viewBox="0 0 20 20"><g transform="translate(0.2 0.2) scale(0.8)"><path d="M10 13a5 5 0 0 0 7.54.54l3-3a5 5 0 0 0-7.07-7.07l-1.72 1.71" stroke="#9198a1" stroke-width="2" fill="none" stroke-linecap="round"/><path d="M14 11a5 5 0 0 0-7.54-.54l-3 3a5 5 0 0 0 7.07 7.07l1.71-1.71" stroke="#9198a1" stroke-width="2" fill="none" stroke-linecap="round"/></g></svg>
<svg class="abs" style="left:958px;top:1330px;" width="13" height="17" viewBox="0 0 13 17"><path d="M0.9 0.9 H12.1 V16.1 L6.5 11.8 L0.9 16.1 Z" stroke="#9198a1" stroke-width="1.5" fill="none"/></svg>
<div class="abs" style="left:621px;top:1373px;width:43px;height:43px;border-radius:50%;background:radial-gradient(ellipse 14% 18% at 30% 55%, rgba(235,130,70,0.95) 0%, rgba(0,0,0,0) 100%),radial-gradient(ellipse 22% 28% at 26% 55%, rgba(190,90,45,0.8) 0%, rgba(0,0,0,0) 100%),radial-gradient(ellipse 22% 16% at 60% 88%, rgba(215,100,45,0.9) 0%, rgba(0,0,0,0) 100%),radial-gradient(ellipse 14% 14% at 76% 80%, rgba(200,90,40,0.7) 0%, rgba(0,0,0,0) 100%),radial-gradient(ellipse 26% 20% at 45% 68%, rgba(150,60,30,0.6) 0%, rgba(0,0,0,0) 100%),radial-gradient(ellipse 30% 16% at 50% 14%, rgba(62,84,145,0.95) 0%, rgba(40,55,100,0.6) 60%, rgba(0,0,0,0) 100%),radial-gradient(ellipse 24% 18% at 74% 24%, rgba(85,110,178,0.9) 0%, rgba(0,0,0,0) 100%),radial-gradient(ellipse 13% 26% at 88% 50%, rgba(80,105,170,0.85) 0%, rgba(0,0,0,0) 100%),radial-gradient(ellipse 18% 12% at 28% 24%, rgba(60,80,140,0.7) 0%, rgba(0,0,0,0) 100%),#15121a"></div>
<div class="abs" style="left:674px;top:1373px;width:375px;height:200px;background:#161b22;border-radius:12px;border-left:3px solid #58a6ff"></div>
<div class="abs" style="left:810px;top:1390px;width:55px;height:29px;border:1px solid #30363d;border-radius:15px"></div>
<svg class="abs" style="left:824px;top:1396px;" width="16" height="16" viewBox="0 0 16 16"><circle cx="8" cy="8" r="7.4" fill="#fbbf24"/><path d="M3.8 8.8 Q8 14.5 12.2 8.8 Z" fill="#7c2d12"/><path d="M5 10.6 Q8 12 11 10.6 L10.4 12 Q8 13.3 5.6 12 Z" fill="#f472b6"/><path d="M3.8 6.2 Q5 4.6 6.6 6 M9.4 6 Q11 4.6 12.2 6.2" stroke="#7c2d12" stroke-width="1.1" fill="none"/><path d="M0.6 7.5 Q1.2 10.5 3.2 9.5 Z M15.4 7.5 Q14.8 10.5 12.8 9.5 Z" fill="#60a5fa"/></svg>
<div class="abs" style="left:846px;top:1397px;white-space:nowrap;line-height:1;font-size:15.5px;color:#e6edf3">1</div>
<div class="abs" style="left:872px;top:1390px;width:55px;height:29px;border:1px solid #30363d;border-radius:15px"></div>
<svg class="abs" style="left:886px;top:1396px;" width="16" height="16" viewBox="0 0 16 16"><defs><linearGradient id="gf" x1="0" y1="0" x2="0" y2="1"><stop offset="0" stop-color="#f0412a"/><stop offset="0.6" stop-color="#f98a1c"/><stop offset="1" stop-color="#fcc21b"/></linearGradient></defs><path d="M7.8 0.5 C9 3 12.8 5.5 12.8 10 C12.8 13.4 10.6 15.6 7.6 15.6 C4.6 15.6 2.4 13.4 2.4 10.5 C2.4 8 3.6 6.5 4.6 5.6 C4.6 7.2 5.2 8.2 5.9 8.6 C5.6 5.5 6.5 2.5 7.8 0.5 Z" fill="url(#gf)"/><path d="M7.8 8 C9 9.5 10.5 10.8 10.5 12.6 C10.5 14.2 9.3 15.3 7.6 15.3 C5.9 15.3 4.8 14.2 4.8 12.7 C4.8 11.2 6 10.5 6.5 9.6 C7 10.4 7.4 10.6 7.8 8 Z" fill="#fdd835"/></svg>
<div class="abs" style="left:908px;top:1397px;white-space:nowrap;line-height:1;font-size:15.5px;color:#e6edf3">1</div>
<div class="abs" style="left:935px;top:1390px;width:55px;height:29px;border:1px solid #30363d;border-radius:15px"></div>
<svg class="abs" style="left:949px;top:1396px;" width="16" height="16" viewBox="0 0 16 16"><defs><linearGradient id="gt" x1="0" y1="0" x2="0" y2="1"><stop offset="0" stop-color="#fcd34d"/><stop offset="1" stop-color="#f59e0b"/></linearGradient></defs><path d="M2.5 8.5 C2.5 7.2 3.5 6.6 4.6 6.4 C5.8 5.4 6.6 3.6 6.8 1.8 C7 0.3 9.5 0.4 9.6 2.3 C9.7 3.6 9.3 4.9 8.9 5.9 H11.6 C12.9 5.9 13.4 7.1 12.9 7.9 C13.6 8.4 13.6 9.6 12.9 10.1 C13.5 10.7 13.4 11.8 12.6 12.2 C13 13.1 12.5 14.2 11.3 14.2 H6 C3.9 14.2 2.5 13 2.5 11 Z" fill="url(#gt)"/><path d="M8.6 8 H12.6 M8.6 10.1 H12.6 M8.8 12.2 H12.2" stroke="#e39a0b" stroke-width="0.7"/></svg>
<div class="abs" style="left:971px;top:1397px;white-space:nowrap;line-height:1;font-size:15.5px;color:#e6edf3">2</div>
<div class="abs" style="left:997px;top:1390px;width:34px;height:27px;border:1px dashed #30363d;border-radius:6px"></div>
<svg class="abs" style="left:1005px;top:1394px;" width="18" height="18" viewBox="0 0 18 18"><circle cx="9" cy="9" r="7.3" stroke="#9198a1" stroke-width="1.4" fill="none"/><circle cx="6.4" cy="7" r="0.9" fill="#9198a1"/><circle cx="11.6" cy="7" r="0.9" fill="#9198a1"/><path d="M5.9 10.6 Q9 13.3 12.1 10.6" stroke="#9198a1" stroke-width="1.4" fill="none" stroke-linecap="round"/></svg>
<div class="abs" style="left:694px;top:1427px;white-space:nowrap;line-height:1;font-size:18.6px;font-weight:bold;letter-spacing:-0.6px;color:#e3b341">Michael Burry</div>
<div class="abs" style="left:2381px;top:277px;width:19px;height:1155px;background:#171717"></div>
<svg class="abs" style="left:2384px;top:282px;" width="13" height="9" viewBox="0 0 13 9"><path d="M6.5 1 L12 8 H1 Z" fill="#4a4a4a"/></svg>
<div class="abs" style="left:2385px;top:1320px;width:11px;height:58px;background:#3b3b3b;border-radius:6px"></div>
<svg class="abs" style="left:2384px;top:1418px;" width="13" height="9" viewBox="0 0 13 9"><path d="M1 1 H12 L6.5 8 Z" fill="#4a4a4a"/></svg>
<div class="abs" style="left:2345px;top:1329px;width:40px;height:40px;background:#161b22;border:1px solid #30363d;border-radius:50%"></div>
<svg class="abs" style="left:2355px;top:1338px;" width="20" height="22" viewBox="0 0 20 22"><path d="M10 6 V21" stroke="#7d8590" stroke-width="1.5"/><path d="M6.8 9.5 L10 5.4 L13.2 9.5 Z" fill="#7d8590"/></svg>
<div class="abs" style="left:2345px;top:1377px;width:40px;height:40px;background:#161b22;border:1px solid #30363d;border-radius:50%"></div>
<svg class="abs" style="left:2355px;top:1386px;" width="20" height="22" viewBox="0 0 20 22"><path d="M10 3 V18" stroke="#7d8590" stroke-width="1.5"/><path d="M6.8 14.5 L10 18.6 L13.2 14.5 Z" fill="#7d8590"/></svg>
<div class="abs" style="left:601px;top:109px;width:1799px;height:85px;background:#161b22;border-bottom:1px solid #30363d"></div>
<div class="abs" style="left:616px;top:117px;width:1768px;height:34px;background:#0d1117;border:1px solid #30363d;border-radius:6px"></div>
<svg class="abs" style="left:626px;top:126px;" width="18" height="15" viewBox="0 0 18 15"><path d="M1.2 1 H16.8 L10.6 8.2 V14 L7.4 12.2 V8.2 Z" stroke="#9198a1" stroke-width="1.4" fill="none" stroke-linejoin="round"/></svg>
<div class="abs" style="left:651px;top:128px;white-space:nowrap;line-height:1;font-size:15px;color:#6e7681">Filter messages...</div>
<div class="abs" style="left:616px;top:159px;width:130px;height:27px;background:#2b2a1f;border:1px solid #e3b341;border-radius:14px"></div>
<svg class="abs" style="left:627px;top:167px;" width="11" height="11" viewBox="0 0 11 11"><path d="M5.5 0.22 L7.04 3.96 L10.89 4.07 L7.92 6.6 L8.91 10.559999999999999 L5.5 8.36 L2.09 10.559999999999999 L3.08 6.6 L0.11 4.07 L3.96 3.96 Z" fill="#e3b341"/></svg>
<div class="abs" style="left:643px;top:166px;white-space:nowrap;line-height:1;font-size:13px;font-weight:bold;color:#e3b341">Watched Users</div>
<div class="abs" style="left:753px;top:159px;width:120px;height:27px;border:1px solid #30363d;border-radius:14px"></div>
<svg class="abs" style="left:764px;top:164px;" width="13" height="17" viewBox="0 0 13 17"><path d="M0.9 0.9 H12.1 V16.1 L6.5 11.8 L0.9 16.1 Z" stroke="#9ca3ab" stroke-width="1.5" fill="none"/></svg>
<div class="abs" style="left:783px;top:166px;white-space:nowrap;line-height:1;font-size:14px;color:#aeb6bf;-webkit-text-stroke:0.35px #aeb6bf">Bookmarked</div>
<div class="abs" style="left:881px;top:159px;width:92px;height:27px;border:1px solid #30363d;border-radius:14px"></div>
<div class="abs" style="left:891px;top:166px;white-space:nowrap;line-height:1;font-size:13.2px;color:#aeb6bf;-webkit-text-stroke:0.35px #aeb6bf">Has Replies</div>
<svg class="abs" style="left:2256px;top:163px;" width="13" height="17" viewBox="0 0 13 17"><path d="M0.9 0.9 H12.1 V16.1 L6.5 11.8 L0.9 16.1 Z" stroke="#8b949e" stroke-width="1.5" fill="none"/></svg>
<div class="abs" style="left:2275px;top:165px;white-space:nowrap;line-height:1;font-size:13.7px;color:#8b949e">Bookmarks List ›</div>
<div class="abs" style="left:601px;top:194px;width:1799px;height:83px;background:#161b22;border-bottom:1px solid #30363d"></div>
<div class="abs" style="left:621px;top:207px;width:74px;height:29px;border:1px solid #30363d;border-radius:5px"></div>
<svg class="abs" style="left:632px;top:214px;" width="11" height="16" viewBox="0 0 11 16"><path d="M9 1.5 L2.6 8 L9 14.5" stroke="#8b949e" stroke-width="1.8" fill="none"/></svg>
<div class="abs" style="left:648px;top:214px;white-space:nowrap;line-height:1;font-size:15.5px;color:#8b949e">Back</div>
<div class="abs" style="left:708px;top:207px;width:28px;height:28px;border-radius:50%;background:radial-gradient(ellipse 14% 18% at 30% 55%, rgba(235,130,70,0.95) 0%, rgba(0,0,0,0) 100%),radial-gradient(ellipse 22% 28% at 26% 55%, rgba(190,90,45,0.8) 0%, rgba(0,0,0,0) 100%),radial-gradient(ellipse 22% 16% at 60% 88%, rgba(215,100,45,0.9) 0%, rgba(0,0,0,0) 100%),radial-gradient(ellipse 14% 14% at 76% 80%, rgba(200,90,40,0.7) 0%, rgba(0,0,0,0) 100%),radial-gradient(ellipse 26% 20% at 45% 68%, rgba(150,60,30,0.6) 0%, rgba(0,0,0,0) 100%),radial-gradient(ellipse 30% 16% at 50% 14%, rgba(62,84,145,0.95) 0%, rgba(40,55,100,0.6) 60%, rgba(0,0,0,0) 100%),radial-gradient(ellipse 24% 18% at 74% 24%, rgba(85,110,178,0.9) 0%, rgba(0,0,0,0) 100%),radial-gradient(ellipse 13% 26% at 88% 50%, rgba(80,105,170,0.85) 0%, rgba(0,0,0,0) 100%),radial-gradient(ellipse 18% 12% at 28% 24%, rgba(60,80,140,0.7) 0%, rgba(0,0,0,0) 100%),#15121a"></div>
<div class="abs" style="left:743px;top:215px;white-space:nowrap;line-height:1;font-size:15.4px;font-weight:bold;color:#e6edf3">Michael Burry</div>
<div class="abs" style="left:853px;top:215px;white-space:nowrap;line-height:1;font-size:15.3px;color:#8b949e">1/26/2026</div>
<div class="abs" style="left:2180px;top:215px;width:200px;text-align:right;white-space:nowrap;line-height:1;font-size:14.75px;color:#8b949e">76 replies</div>
<div class="abs" style="left:674px;top:246px;white-space:nowrap;line-height:1;font-size:14.66px;color:#a5adb5">This subscriber chat discussion is for the latest post, Final Stop Game Stop: The Jig is Up. Thank you all for your tho...</div>
<div class="abs" style="left:601px;top:1432px;width:1799px;height:68px;background:#161b22;border-top:1px solid #30363d"></div>
<div class="abs" style="left:616px;top:1443px;width:1664px;height:48px;background:#0d1117;border:1px solid #30363d;border-radius:10px"></div>
<div class="abs" style="left:632px;top:1459px;white-space:nowrap;line-height:1;font-size:16.4px;color:#6e7681">Type a message...</div>
<svg class="abs" style="left:2300px;top:1461px;" width="23" height="23" viewBox="0 0 23 23"><rect x="1" y="1" width="19.5" height="19.5" rx="3" stroke="#9198a1" stroke-width="1.6" fill="none"/><circle cx="7" cy="7" r="2" stroke="#9198a1" stroke-width="1.5" fill="none"/><path d="M2 19.5 L13.5 9 L20.5 15.5" stroke="#9198a1" stroke-width="1.6" fill="none"/></svg>
<div class="abs" style="left:2340px;top:1446px;width:45px;height:45px;background:#2f5480;border-radius:50%"></div>
<svg class="abs" style="left:2352px;top:1456px;" width="22" height="26" viewBox="0 0 22 26"><path d="M11 5 V23" stroke="#7f8a96" stroke-width="1.4"/><path d="M7.2 9.2 L11 4.6 L14.8 9.2" stroke="#7f8a96" stroke-width="1.6" fill="none"/></svg>
<!--/MAIN-->
<div class="abs" style="left:6px;top:0;width:166px;height:1px;background:#b5b5b5;z-index:51"></div>
<div class="abs" style="left:0;top:0;width:2400px;height:1500px;border:1px solid #3d3d3d;border-radius:8px;box-shadow:0 0 0 12px #0c0c0c;pointer-events:none;z-index:50"></div>

</body></html>
